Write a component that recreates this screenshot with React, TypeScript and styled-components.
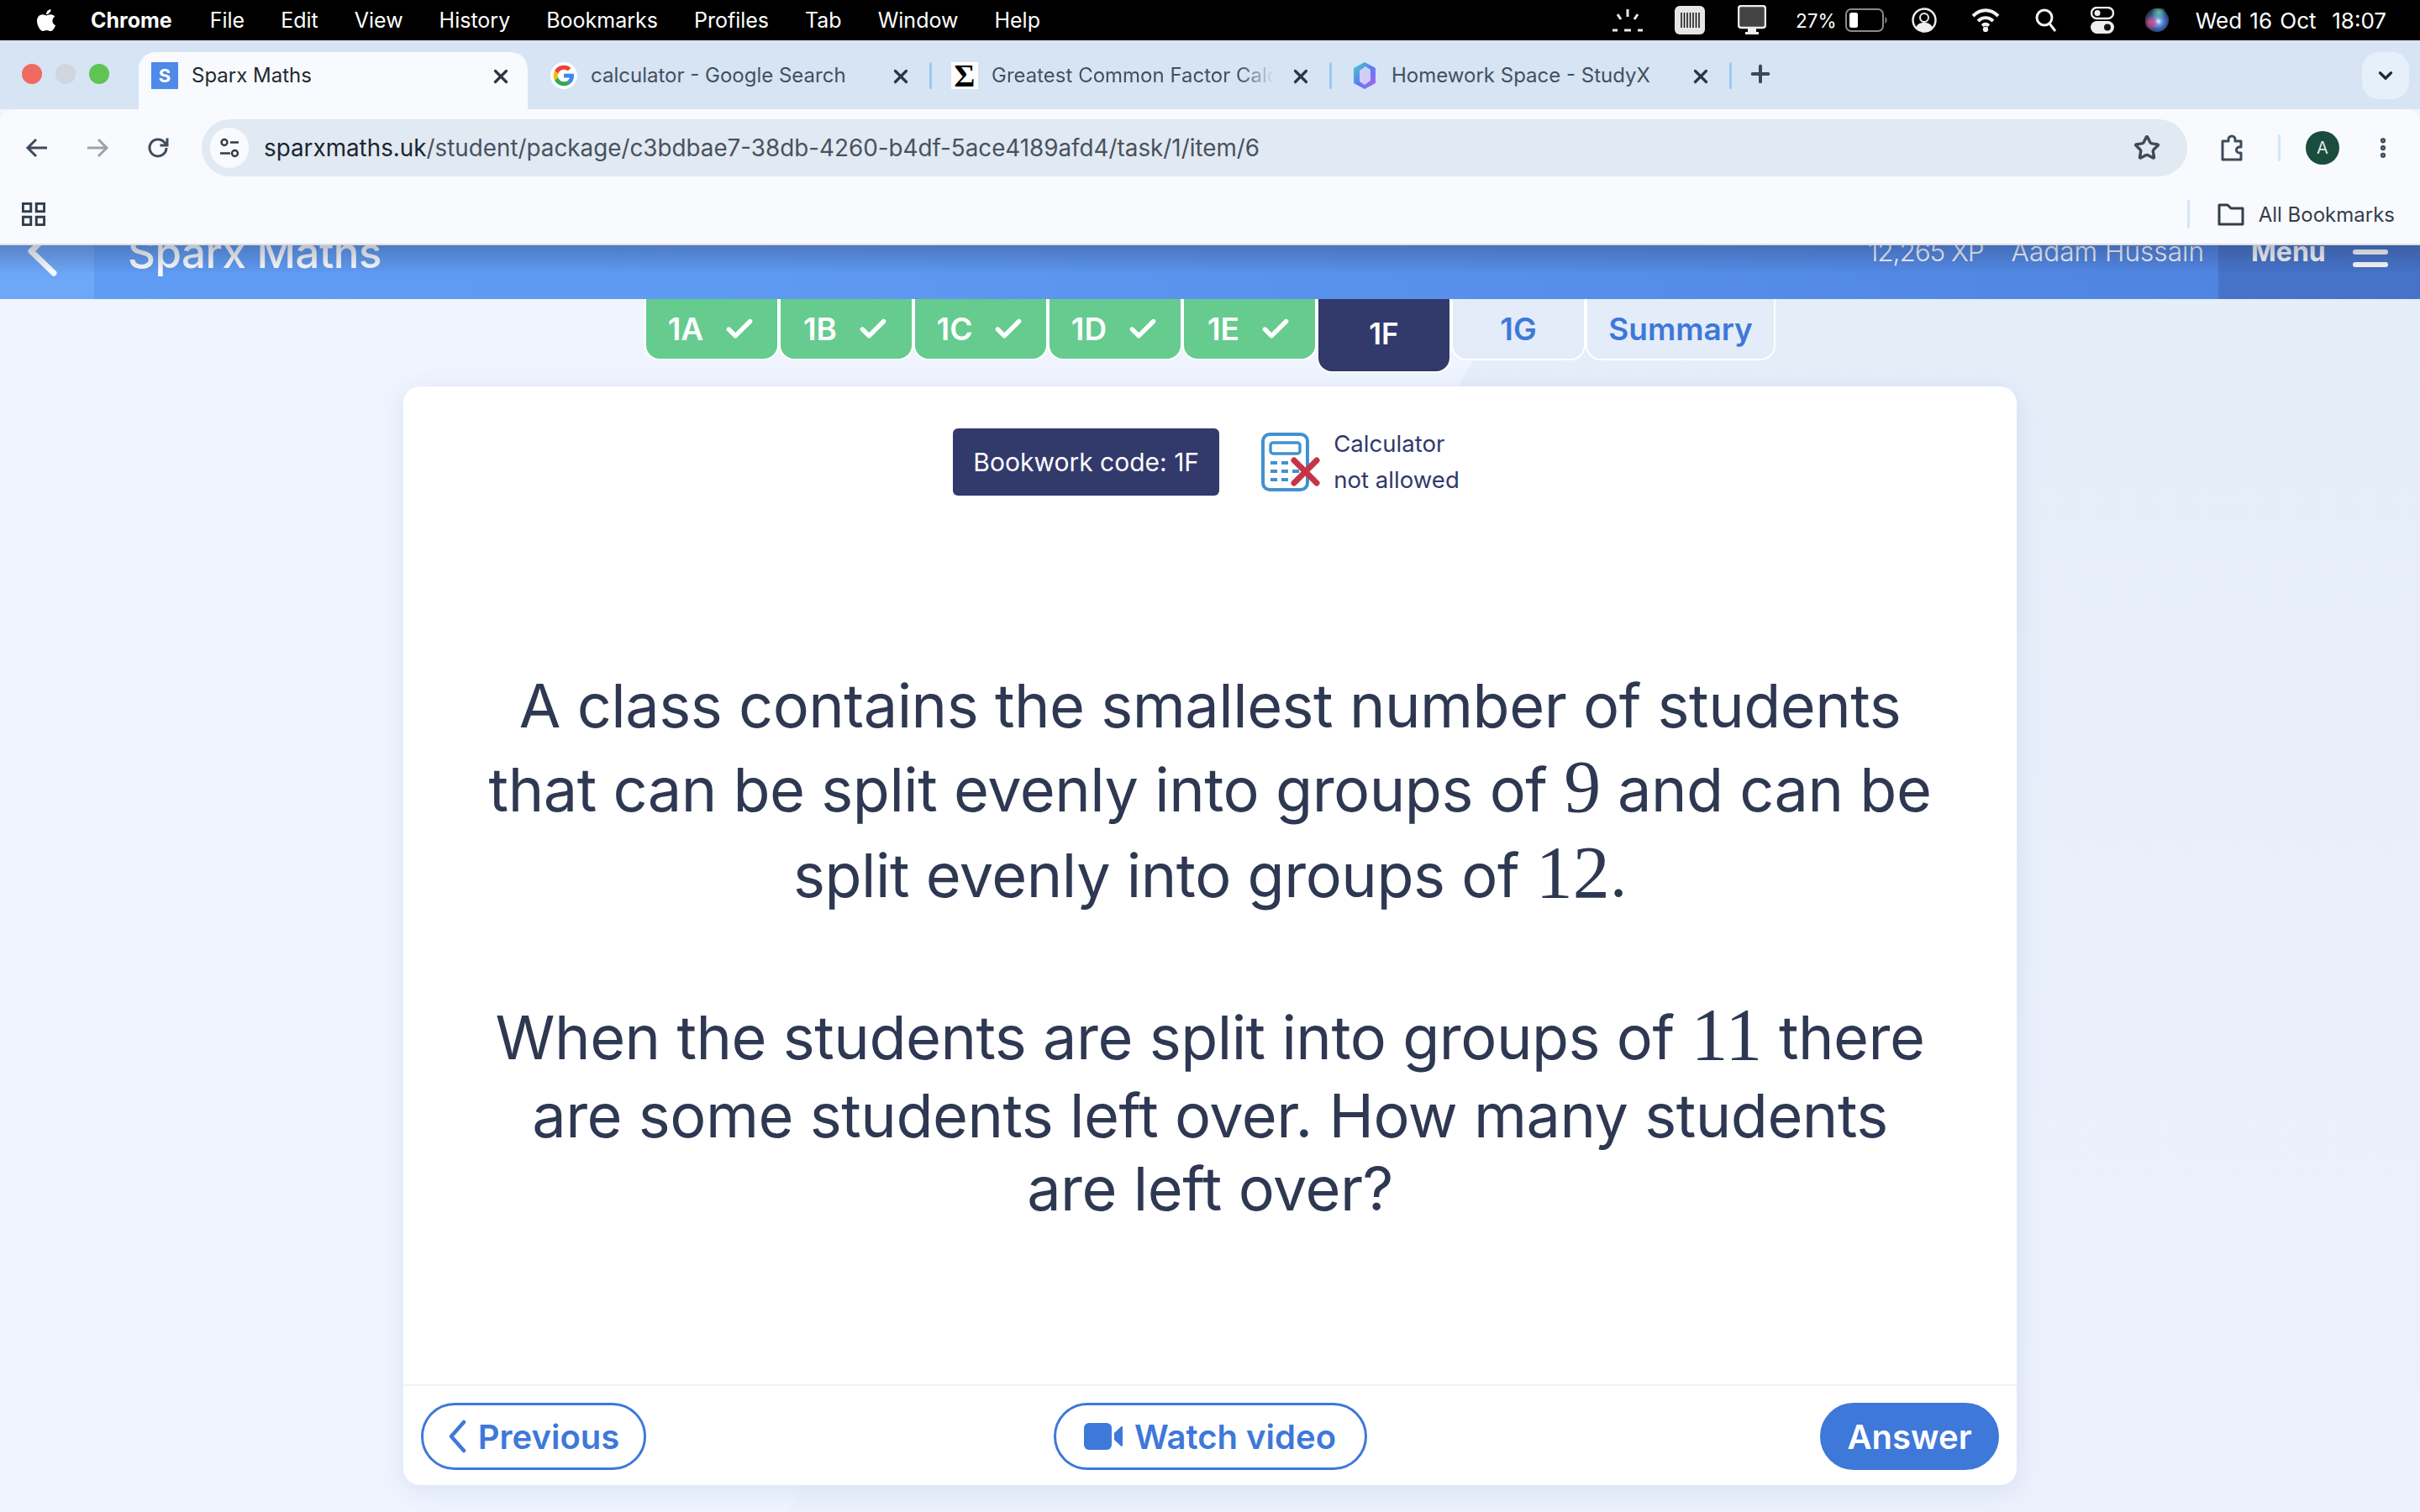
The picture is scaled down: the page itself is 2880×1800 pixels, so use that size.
import React from 'react'
import styled, { createGlobalStyle } from 'styled-components'
import { FaApple } from 'react-icons/fa'
import { Check, ChevronDown, EllipsisVertical, Plus, Star, X } from 'lucide-react'

const GlobalStyle = createGlobalStyle`
  html, body {
    margin: 0;
    padding: 0;
    background: #eff4fe;
  }
  * {
    box-sizing: border-box;
  }
`

const Screen = styled.div`
  width: 2880px;
  height: 1800px;
  overflow: hidden;
  display: flex;
  flex-direction: column;
  font-family: Inter, 'Liberation Sans', sans-serif;
`

/* macOS menu bar */
const MenuBar = styled.div`
  height: 48px;
  flex: none;
  background: #000;
  color: #fff;
  display: flex;
  align-items: center;
  padding: 0 40px 0 40px;
  font-size: 25px;
`

const MenuItems = styled.div`
  display: flex;
  align-items: center;
  gap: 43px;
  margin-left: 38px;
`

const MenuItem = styled.span<{ $bold?: boolean }>`
  font-weight: ${(p) => (p.$bold ? 700 : 400)};
  white-space: nowrap;
  &:nth-child(2) {
    margin-left: 2px;
  }
`

const StatusArea = styled.div`
  margin-left: auto;
  display: flex;
  align-items: center;
`

const StatusSlot = styled.span<{ $ml: number }>`
  display: flex;
  align-items: center;
  margin-left: ${(p) => p.$ml}px;
  white-space: nowrap;
  font-size: 22.5px;
`

const Clock = styled.span`
  margin-left: 32px;
  font-size: 26px;
  word-spacing: 2px;
  white-space: nowrap;
`

/* chrome tab strip */
const TabStrip = styled.div`
  height: 82px;
  flex: none;
  background: #d6e4f4;
  display: flex;
  align-items: flex-end;
  position: relative;
`

const Lights = styled.div`
  width: 165px;
  height: 68px;
  flex: none;
  display: flex;
  gap: 16px;
  padding: 14px 0 0 26px;
`

const Light = styled.span<{ $c: string }>`
  width: 24px;
  height: 24px;
  border-radius: 50%;
  background: ${(p) => p.$c};
`

const BrowserTab = styled.div<{ $active?: boolean; $w: number; $pad: number }>`
  width: ${(p) => p.$w}px;
  height: 68px;
  flex: none;
  display: flex;
  align-items: flex-start;
  padding: 12px 0 0 ${(p) => p.$pad}px;
  position: relative;
  background: ${(p) => (p.$active ? '#f8fafe' : 'transparent')};
  border-radius: 20px 20px 0 0;
  color: ${(p) => (p.$active ? '#1f2933' : '#42505f')};
  font-size: 24px;
`

const TabSeparator = styled.span`
  position: absolute;
  right: 0;
  top: 12px;
  width: 3px;
  height: 32px;
  border-radius: 2px;
  background: #9fc8f3;
`

const Favicon = styled.span<{ $bg?: string }>`
  width: 32px;
  height: 32px;
  flex: none;
  display: flex;
  align-items: center;
  justify-content: center;
  background: ${(p) => p.$bg || 'transparent'};
  color: #fff;
  font-weight: 700;
  font-size: 22px;
`

const SigmaGlyph = styled.span`
  color: #000;
  font-family: 'Liberation Serif', serif;
  font-weight: 700;
  font-size: 38px;
  line-height: 1;
`

const TabTitle = styled.span<{ $fade?: boolean }>`
  margin-left: 16px;
  width: 336px;
  line-height: 32px;
  overflow: hidden;
  white-space: nowrap;
  ${(p) =>
    p.$fade &&
    `mask-image: linear-gradient(to right, #000 88%, transparent 100%);
     -webkit-mask-image: linear-gradient(to right, #000 88%, transparent 100%);`}
`

const TabClose = styled.span<{ $active?: boolean }>`
  position: absolute;
  right: ${(p) => (p.$active ? 19 : 24)}px;
  top: 16px;
  display: flex;
  color: #2c3640;
`

const NewTab = styled.span`
  margin-left: 18px;
  display: flex;
  padding-top: 10px;
  color: #3c4858;
  height: 68px;
`

const TabListButton = styled.span`
  position: absolute;
  right: 13px;
  top: 14px;
  width: 56px;
  height: 56px;
  border-radius: 20px;
  background: #e6f0fb;
  display: flex;
  align-items: center;
  justify-content: center;
  color: #1f2933;
`

/* chrome toolbar + bookmarks */
const Toolbar = styled.div`
  height: 80px;
  flex: none;
  background: #f8fafe;
  border-radius: 16px 16px 0 0;
  display: flex;
  align-items: flex-start;
  padding-top: 12px;
  color: #3f4b5a;
`

const NavIcons = styled.div`
  width: 240px;
  height: 68px;
  flex: none;
  display: flex;
  align-items: center;
  gap: 44px;
  padding-left: 30px;
`

const UrlPill = styled.div`
  width: 2363px;
  height: 68px;
  flex: none;
  border-radius: 34px;
  background: #e1e9f2;
  display: flex;
  align-items: center;
  padding: 0 32px 0 10px;
`

const SiteInfo = styled.span`
  width: 46px;
  height: 48px;
  border-radius: 24px;
  background: #f8fafe;
  display: flex;
  align-items: center;
  justify-content: center;
  flex: none;
`

const UrlText = styled.span`
  margin-left: 18px;
  font-size: 27.8px;
  color: #47525f;
  white-space: nowrap;
`

const UrlHost = styled.span`
  color: #1b2530;
`

const StarSlot = styled.span`
  margin-left: auto;
  display: flex;
  color: #3f4b5a;
`

const ToolbarEnd = styled.div`
  flex: 1;
  height: 68px;
  display: flex;
  align-items: center;
  padding-left: 38px;
`

const ThinRule = styled.span<{ $h: number; $ml?: number }>`
  width: 3px;
  height: ${(p) => p.$h}px;
  margin-left: ${(p) => p.$ml || 0}px;
  background: #d5e6f8;
  flex: none;
`

const Avatar = styled.span`
  width: 40px;
  height: 40px;
  margin-left: 30px;
  border-radius: 50%;
  background: #1a4d3e;
  color: #dfeee8;
  font-size: 20px;
  display: flex;
  align-items: center;
  justify-content: center;
  flex: none;
`

const DotsSlot = styled.span`
  margin-left: 37px;
  display: flex;
  color: #3f4b5a;
`

const BookmarksBar = styled.div`
  height: 82px;
  flex: none;
  background: #f8fafe;
  border-bottom: 2px solid #dde1e6;
  display: flex;
  align-items: center;
  padding: 10px 30px 0 26px;
  color: #3f4b5a;
`

const AllBookmarks = styled.div`
  margin-left: auto;
  display: flex;
  align-items: center;
  gap: 17px;
  font-size: 24px;
  color: #333e4b;
`

const BookmarkRule = styled(ThinRule)`
  margin-right: 16px;
`

/* sparx page */
const Page = styled.main`
  flex: 1;
  position: relative;
  overflow: hidden;
  display: flex;
  flex-direction: column;
  background: #eff4fe;
`

const Backdrop = styled.div`
  position: absolute;
  inset: 0;
  background: linear-gradient(180deg, #e5edf9 0%, #ecf1fd 100%);
  clip-path: polygon(1835px 0, 2880px 0, 2880px 1508px, 937px 1508px);
`

const Header = styled.header`
  height: 64px;
  flex: none;
  position: relative;
  overflow: hidden;
  display: flex;
  background: linear-gradient(90deg, #5f9cf3 0%, #5f9af2 30%, #4d82e0 100%);
  color: #fff;
  &::after {
    content: '';
    position: absolute;
    inset: 0 0 auto 0;
    height: 34px;
    background: linear-gradient(180deg, rgba(40, 50, 80, 0.3), rgba(40, 50, 80, 0));
    pointer-events: none;
  }
`

const BackBlock = styled.div`
  width: 112px;
  flex: none;
  background: #6ea6f8;
  padding-left: 33px;
  svg {
    display: block;
    margin-top: -23px;
  }
`

const Brand = styled.div`
  margin-left: 40px;
  font-size: 51px;
  font-weight: 500;
  line-height: 66px;
  margin-top: -24px;
  letter-spacing: -0.5px;
  white-space: nowrap;
`

const HeaderRight = styled.div`
  margin-left: auto;
  display: flex;
  align-items: flex-start;
`

const HeaderText = styled.span<{ $tight?: boolean }>`
  font-size: 31.6px;
  font-weight: 300;
  line-height: 40px;
  margin-top: -12px;
  margin-right: 33px;
  letter-spacing: ${(p) => (p.$tight ? -1.1 : 0)}px;
  white-space: nowrap;
`

const MenuBlock = styled.div`
  width: 240px;
  height: 64px;
  margin-left: -16px;
  background: #4673c9;
  display: flex;
  align-items: flex-start;
  padding-left: 39px;
`

const MenuLabel = styled.span`
  font-size: 32px;
  font-weight: 700;
  line-height: 40px;
  margin-top: -12px;
`

const Burger = styled.span`
  margin: 5px 0 0 32px;
  width: 42px;
  height: 21px;
  display: flex;
  flex-direction: column;
  justify-content: space-between;
  i {
    display: block;
    height: 6px;
    border-radius: 3px;
    background: #fff;
  }
`

const PartTabs = styled.nav`
  position: relative;
  display: flex;
  justify-content: center;
  align-items: flex-start;
  gap: 4px;
  height: 88px;
  flex: none;
`

const PartTab = styled.div<{ $state: 'done' | 'current' | 'todo'; $w?: number }>`
  width: ${(p) => p.$w || 156}px;
  height: ${(p) => (p.$state === 'current' ? 86 : 71)}px;
  border-radius: 0 0 16px 16px;
  display: flex;
  align-items: ${(p) => (p.$state === 'current' ? 'flex-end' : 'center')};
  justify-content: center;
  gap: 24px;
  padding-bottom: ${(p) => (p.$state === 'current' ? 24 : 0)}px;
  font-size: ${(p) => (p.$state === 'current' ? 35 : 37)}px;
  font-weight: 600;
  background: ${(p) => (p.$state === 'done' ? '#65cb8f' : p.$state === 'current' ? '#32396b' : '#e3ecf8')};
  color: ${(p) => (p.$state === 'todo' ? '#3e78d9' : '#fff')};
  box-shadow: 0 0 0 2px #fff;
  clip-path: inset(0 -3px -3px -3px);
`

const Card = styled.section`
  position: relative;
  width: 1920px;
  height: 1308px;
  margin: 16px auto 0;
  background: #fff;
  border-radius: 20px;
  box-shadow: 0 6px 30px rgba(90, 120, 190, 0.14);
  display: flex;
  flex-direction: column;
`

const CardBody = styled.div`
  flex: 1;
  padding-top: 47px;
  display: flex;
  flex-direction: column;
  align-items: center;
`

const MetaRow = styled.div`
  display: flex;
  align-items: center;
  justify-content: center;
  width: 1920px;
  padding-right: 9px;
`

const Bookwork = styled.div`
  width: 317px;
  height: 80px;
  border-radius: 6px;
  background: #32396b;
  color: #fff;
  font-size: 30px;
  display: flex;
  align-items: center;
  justify-content: center;
  white-space: nowrap;
`

const CalcInfo = styled.div`
  display: flex;
  align-items: center;
  margin-left: 50px;
`

const CalcLabel = styled.div`
  margin-left: 16px;
  color: #32396b;
  font-size: 27.6px;
  line-height: 43px;
`

const Question = styled.div`
  margin-top: 200px;
  width: 1920px;
  text-align: center;
  color: #2e3852;
  font-size: 72px;
  letter-spacing: -0.5px;
`

const QLine = styled.div<{ $h: number; $gap?: number }>`
  height: ${(p) => p.$h}px;
  line-height: ${(p) => p.$h}px;
  margin-top: ${(p) => p.$gap || 0}px;
  white-space: nowrap;
`

const MathNum = styled.span`
  font-family: 'Liberation Serif', serif;
  font-size: 88px;
  letter-spacing: 0;
`

const CardFooter = styled.footer`
  height: 120px;
  flex: none;
  border-top: 2px solid #eff4fb;
  padding: 20px 21px 0 21px;
  display: grid;
  grid-template-columns: 1fr auto 1fr;
  align-items: start;
`

const PillButton = styled.button<{ $w: number; $solid?: boolean; $end?: boolean }>`
  width: ${(p) => p.$w}px;
  height: 80px;
  border-radius: 40px;
  border: 3px solid #3e78d9;
  background: ${(p) => (p.$solid ? '#3e78d9' : '#fff')};
  color: ${(p) => (p.$solid ? '#fff' : '#3e78d9')};
  font-family: inherit;
  font-size: 40px;
  font-weight: 600;
  display: flex;
  align-items: center;
  justify-content: center;
  gap: 14px;
  padding: 0;
  justify-self: ${(p) => (p.$end ? 'end' : 'start')};
`

const GoogleG = () => (
  <svg width="32" height="32" viewBox="0 0 48 48">
    <circle cx="24" cy="24" r="24" fill="#fff" />
    <path fill="#EA4335" d="M24 13c3 0 5.300 1 7.200 2.800l5.300-5.300C33.300 7.500 29 5.700 24 5.700 16.800 5.700 10.600 9.800 7.600 15.800l6.200 4.800C15.200 16.200 19.200 13 24 13z" />
    <path fill="#4285F4" d="M42 24.500c0-1.300-.1-2.500-.3-3.700H24v7h10.100c-.4 2.300-1.700 4.300-3.700 5.600l6 4.600C40 34.700 42 30 42 24.500z" />
    <path fill="#FBBC05" d="M13.800 27.400c-.4-1.100-.6-2.200-.6-3.400s.2-2.300.6-3.400l-6.200-4.800C6.400 18.200 5.700 21 5.700 24s.7 5.800 1.900 8.200l6.200-4.800z" />
    <path fill="#34A853" d="M24 42.300c5 0 9.100-1.600 12.400-4.500l-6-4.600c-1.700 1.100-3.800 1.800-6.400 1.800-4.800 0-8.800-3.200-10.200-7.600l-6.200 4.800c3 6 9.200 10.100 16.400 10.100z" />
  </svg>
)

const StudyXIcon = () => (
  <svg width="30" height="34" viewBox="0 0 30 34">
    <defs>
      <linearGradient id="studyx" x1="0" y1="0" x2="1" y2="1">
        <stop offset="0" stopColor="#46d6c0" />
        <stop offset="0.5" stopColor="#5b7cf5" />
        <stop offset="1" stopColor="#b062f0" />
      </linearGradient>
    </defs>
    <path d="M15 1 28 8v18l-13 7-13-7V8z" fill="url(#studyx)" />
    <path d="M16 6l6 4v13l-7 5-6-4V11z" fill="#e4dcfb" opacity="0.85" />
  </svg>
)

const SiteInfoIcon = () => (
  <svg width="26" height="26" viewBox="0 0 26 26" fill="none" stroke="#2f3a46" strokeWidth="2.400">
    <circle cx="7" cy="6.500" r="3.500" />
    <path d="M14 6.500h10M2 19.500h12" />
    <circle cx="19.500" cy="19.500" r="3.500" />
  </svg>
)

const ArrowIcon = ({ dir, color }: { dir: 'left' | 'right'; color: string }) => (
  <svg width="28" height="28" viewBox="0 0 28 28" fill="none" stroke={color} strokeWidth="3">
    {dir === 'left' ? <path d="M26 14H4M13 4 3 14l10 10" /> : <path d="M2 14h22M15 4l10 10-10 10" />}
  </svg>
)

const ReloadIcon = () => (
  <svg width="28" height="28" viewBox="0 0 28 28" fill="none" stroke="#3f4b5a" strokeWidth="3">
    <path d="M24 14a10 10 0 1 1-3-7.200L24 10" />
    <path d="M25 2.500V11h-8.500" />
  </svg>
)

const ExtensionIcon = () => (
  <svg width="32" height="32" viewBox="0 0 32 32" fill="none" stroke="#3f4b5a" strokeWidth="3" strokeLinejoin="round">
    <path d="M4 8h7V6a4 4 0 0 1 8 0v2h7v7h-2a3.500 3.500 0 0 0 0 7h2v8H4z" />
  </svg>
)

const AppsIcon = () => (
  <svg width="28" height="28" viewBox="0 0 30 30" fill="none" stroke="#333e4b" strokeWidth="3.200">
    <rect x="1.500" y="1.500" width="10" height="10" />
    <rect x="18.500" y="1.500" width="10" height="10" />
    <rect x="1.500" y="18.500" width="10" height="10" />
    <rect x="18.500" y="18.500" width="10" height="10" />
  </svg>
)

const FolderIcon = () => (
  <svg width="32" height="28" viewBox="0 0 32 28" fill="none" stroke="#333e4b" strokeWidth="3" strokeLinejoin="round">
    <path d="M2 3h10l4 4h14v19H2z" />
  </svg>
)

const CalcNotAllowed = () => (
  <svg width="70" height="70" viewBox="0 0 70 70" fill="none">
    <rect x="2" y="2" width="53" height="66" rx="8" stroke="#4391d0" strokeWidth="4" />
    <rect x="11" y="12" width="35" height="13" rx="3" stroke="#4391d0" strokeWidth="3.500" />
    <path d="M11 36h8M24 36h8M11 46h8M24 46h8M37 46h8M11 56h8M24 56h8" stroke="#4391d0" strokeWidth="4" />
    <path d="M39 33 66 60M66 33 39 60" stroke="#c63545" strokeWidth="7" strokeLinecap="round" />
  </svg>
)

const VideoIcon = () => (
  <svg width="46" height="32" viewBox="0 0 46 32" fill="#3e78d9">
    <rect x="0" y="0" width="33" height="32" rx="6" />
    <path d="M36 12 44 4.500c1-.8 2-.3 2 1v21c0 1.300-1 1.800-2 1l-8-7.500z" />
  </svg>
)

const PreviousChevron = () => (
  <svg width="22" height="40" viewBox="0 0 22 40" fill="none" stroke="#3e78d9" strokeWidth="4.500" strokeLinecap="round" strokeLinejoin="round">
    <path d="M19 3 4 20l15 17" />
  </svg>
)

const BackChevron = () => (
  <svg width="36" height="60" viewBox="0 0 36 60" fill="none" stroke="#fff" strokeWidth="7" strokeLinecap="round" strokeLinejoin="round">
    <path d="M31 4 4 30l27 26" />
  </svg>
)

const BrightnessIcon = () => (
  <svg width="38" height="32" viewBox="0 0 38 32" fill="none" stroke="#e8e8e8" strokeWidth="3">
    <path d="M19 3v9M7 9l4 6M31 9l-4 6M1 28h6M15 28h8M31 28h6" />
  </svg>
)

const KeyboardIcon = () => (
  <svg width="36" height="34" viewBox="0 0 36 34">
    <rect width="36" height="34" rx="6" fill="#e6e6e6" />
    <path d="M8 8v18M11.500 8v18M15 8v18M18.500 8v18M22 8v18M25.500 8v18M29 8v18" stroke="#111" strokeWidth="1.500" />
  </svg>
)

const DisplayIcon = () => (
  <svg width="34" height="36" viewBox="0 0 34 36">
    <rect x="1" y="1" width="32" height="26" rx="3" fill="#444" stroke="#eee" strokeWidth="2.500" />
    <path d="M12 28h10v4h3v3H9v-3h3z" fill="#eee" />
  </svg>
)

const BatteryIcon = () => (
  <svg width="50" height="28" viewBox="0 0 50 28">
    <rect x="1" y="1" width="44" height="26" rx="6" fill="none" stroke="#8a8a8a" strokeWidth="2" />
    <rect x="5" y="5" width="10" height="18" rx="2.500" fill="#fff" />
    <path d="M47.500 10c1.500.8 2 2.500 2 4s-.5 3.200-2 4z" fill="#8a8a8a" />
  </svg>
)

const UserIcon = () => (
  <svg width="30" height="30" viewBox="0 0 30 30" fill="#eee">
    <circle cx="15" cy="15" r="13.500" fill="none" stroke="#eee" strokeWidth="2.400" />
    <circle cx="15" cy="12" r="5" fill="none" stroke="#eee" strokeWidth="2" />
    <path d="M5 24c2-5 6-6 10-6s8 1 10 6c-2.500 3-6 4.500-10 4.500S7.500 27 5 24z" />
  </svg>
)

const WifiIcon = () => (
  <svg width="34" height="28" viewBox="0 0 34 28" fill="none" stroke="#f2f2f2" strokeWidth="4">
    <path d="M2 9c9-9 21-9 30 0M8 15c5.500-5 12.500-5 18 0M13 20.500c2.500-2 5.500-2 8 0" />
    <circle cx="17" cy="25" r="1.200" fill="#f2f2f2" />
  </svg>
)

const SearchIcon = () => (
  <svg width="26" height="28" viewBox="0 0 26 28" fill="none" stroke="#f2f2f2" strokeWidth="3">
    <circle cx="11" cy="11" r="9" />
    <path d="M17 18l7 9" />
  </svg>
)

const ControlIcon = () => (
  <svg width="28" height="32" viewBox="0 0 28 32">
    <rect x="1" y="1" width="26" height="13" rx="6.500" fill="none" stroke="#eee" strokeWidth="2.400" />
    <circle cx="8" cy="7.500" r="3.500" fill="#eee" />
    <rect y="17" width="28" height="15" rx="7.500" fill="#eee" />
    <circle cx="20" cy="24.500" r="4" fill="#111" />
  </svg>
)

const SiriIcon = () => (
  <svg width="28" height="28" viewBox="0 0 28 28">
    <defs>
      <radialGradient id="siriCore" cx="0.55" cy="0.55" r="0.5">
        <stop offset="0" stopColor="#f4f6ff" />
        <stop offset="0.3" stopColor="#6f9be8" />
        <stop offset="0.65" stopColor="#3a5fb0" />
        <stop offset="1" stopColor="#2a3a50" />
      </radialGradient>
      <radialGradient id="siriPink" cx="0.5" cy="0.5" r="0.5">
        <stop offset="0" stopColor="#e0457f" />
        <stop offset="1" stopColor="#e0457f" stopOpacity="0" />
      </radialGradient>
      <radialGradient id="siriGreen" cx="0.5" cy="0.5" r="0.5">
        <stop offset="0" stopColor="#5fc0a0" />
        <stop offset="1" stopColor="#5fc0a0" stopOpacity="0" />
      </radialGradient>
    </defs>
    <circle cx="14" cy="14" r="14" fill="url(#siriCore)" />
    <circle cx="7" cy="17" r="9" fill="url(#siriPink)" />
    <circle cx="16" cy="5" r="9" fill="url(#siriGreen)" />
  </svg>
)

const tabs = [
  { id: '1A', state: 'done' },
  { id: '1B', state: 'done' },
  { id: '1C', state: 'done' },
  { id: '1D', state: 'done' },
  { id: '1E', state: 'done' },
  { id: '1F', state: 'current' },
  { id: '1G', state: 'todo' },
  { id: 'Summary', state: 'todo', w: 222 },
] as const

const menus = ['File', 'Edit', 'View', 'History', 'Bookmarks', 'Profiles', 'Tab', 'Window', 'Help']

const App: React.FC = () => {
  return (
    <Screen>
      <GlobalStyle />
      <MenuBar>
        <FaApple size={30} />
        <MenuItems>
          <MenuItem $bold>Chrome</MenuItem>
          {menus.map((m) => (
            <MenuItem key={m}>{m}</MenuItem>
          ))}
        </MenuItems>
        <StatusArea>
          <StatusSlot $ml={0}><BrightnessIcon /></StatusSlot>
          <StatusSlot $ml={37}><KeyboardIcon /></StatusSlot>
          <StatusSlot $ml={39}><DisplayIcon /></StatusSlot>
          <StatusSlot $ml={35}>27%</StatusSlot>
          <StatusSlot $ml={10}><BatteryIcon /></StatusSlot>
          <StatusSlot $ml={29}><UserIcon /></StatusSlot>
          <StatusSlot $ml={41}><WifiIcon /></StatusSlot>
          <StatusSlot $ml={42}><SearchIcon /></StatusSlot>
          <StatusSlot $ml={40}><ControlIcon /></StatusSlot>
          <StatusSlot $ml={37}><SiriIcon /></StatusSlot>
          <Clock>Wed 16 Oct&nbsp; 18:07</Clock>
        </StatusArea>
      </MenuBar>

      <TabStrip>
        <Lights>
          <Light $c="#ef6a5f" />
          <Light $c="#cfd6dd" />
          <Light $c="#5fc454" />
        </Lights>
        <BrowserTab $active $w={463} $pad={15}>
          <Favicon $bg="#4f8ae8">S</Favicon>
          <TabTitle>Sparx Maths</TabTitle>
          <TabClose $active><X size={26} strokeWidth={3} /></TabClose>
        </BrowserTab>
        <BrowserTab $w={481} $pad={27}>
          <Favicon><GoogleG /></Favicon>
          <TabTitle>calculator - Google Search</TabTitle>
          <TabClose><X size={26} strokeWidth={3} /></TabClose>
          <TabSeparator />
        </BrowserTab>
        <BrowserTab $w={476} $pad={23}>
          <Favicon $bg="#fff"><SigmaGlyph>Σ</SigmaGlyph></Favicon>
          <TabTitle $fade>Greatest Common Factor Calculator</TabTitle>
          <TabClose><X size={26} strokeWidth={3} /></TabClose>
          <TabSeparator />
        </BrowserTab>
        <BrowserTab $w={476} $pad={23}>
          <Favicon><StudyXIcon /></Favicon>
          <TabTitle>Homework Space - StudyX</TabTitle>
          <TabClose><X size={26} strokeWidth={3} /></TabClose>
          <TabSeparator />
        </BrowserTab>
        <NewTab><Plus size={32} strokeWidth={3} /></NewTab>
        <TabListButton><ChevronDown size={26} strokeWidth={3} /></TabListButton>
      </TabStrip>

      <Toolbar>
        <NavIcons>
          <ArrowIcon dir="left" color="#3f4b5a" />
          <ArrowIcon dir="right" color="#9aa3ad" />
          <ReloadIcon />
        </NavIcons>
        <UrlPill>
          <SiteInfo><SiteInfoIcon /></SiteInfo>
          <UrlText>
            <UrlHost>sparxmaths.uk</UrlHost>/student/package/c3bdbae7-38db-4260-b4df-5ace4189afd4/task/1/item/6
          </UrlText>
          <StarSlot><Star size={32} strokeWidth={2.6} /></StarSlot>
        </UrlPill>
        <ToolbarEnd>
          <ExtensionIcon />
          <ThinRule $h={32} $ml={38} />
          <Avatar>A</Avatar>
          <DotsSlot><EllipsisVertical size={30} strokeWidth={3} /></DotsSlot>
        </ToolbarEnd>
      </Toolbar>

      <BookmarksBar>
        <AppsIcon />
        <AllBookmarks>
          <BookmarkRule $h={34} />
          <FolderIcon />
          All Bookmarks
        </AllBookmarks>
      </BookmarksBar>

      <Page>
        <Backdrop />
        <Header>
          <BackBlock><BackChevron /></BackBlock>
          <Brand>Sparx Maths</Brand>
          <HeaderRight>
            <HeaderText $tight>12,265 XP</HeaderText>
            <HeaderText>Aadam Hussain</HeaderText>
            <MenuBlock>
              <MenuLabel>Menu</MenuLabel>
              <Burger><i /><i /></Burger>
            </MenuBlock>
          </HeaderRight>
        </Header>

        <PartTabs>
          {tabs.map((t) => (
            <PartTab key={t.id} $state={t.state} $w={'w' in t ? t.w : undefined}>
              {t.id}
              {t.state === 'done' && <Check size={38} strokeWidth={3.4} />}
            </PartTab>
          ))}
        </PartTabs>

        <Card>
          <CardBody>
            <MetaRow>
              <Bookwork>Bookwork code: 1F</Bookwork>
              <CalcInfo>
                <CalcNotAllowed />
                <CalcLabel>
                  Calculator
                  <br />
                  not allowed
                </CalcLabel>
              </CalcInfo>
            </MetaRow>
            <Question>
              <QLine $h={94}>A class contains the smallest number of students</QLine>
              <QLine $h={100}>
                that can be split evenly into groups of <MathNum>9</MathNum> and can be
              </QLine>
              <QLine $h={104}>
                split evenly into groups of <MathNum>12</MathNum>.
              </QLine>
              <QLine $h={99} $gap={91}>
                When the students are split into groups of <MathNum>11</MathNum> there
              </QLine>
              <QLine $h={94}>are some students left over. How many students</QLine>
              <QLine $h={80}>are left over?</QLine>
            </Question>
          </CardBody>
          <CardFooter>
            <PillButton $w={268}>
              <PreviousChevron />
              Previous
            </PillButton>
            <PillButton $w={373}>
              <VideoIcon />
              Watch video
            </PillButton>
            <PillButton $w={213} $solid $end>
              Answer
            </PillButton>
          </CardFooter>
        </Card>
      </Page>
    </Screen>
  )
}

export default App
